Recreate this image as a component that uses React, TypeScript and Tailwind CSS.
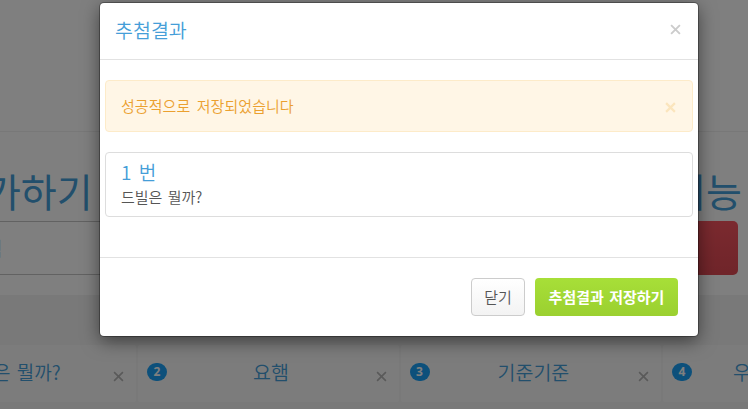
import React from "react";

function Cross({ size, className, width = 1.7 }: { size: number; className: string; width?: number }) {
  return (
    <svg width={size} height={size} viewBox="0 0 10 10" className={className} fill="none" stroke="currentColor" strokeWidth={width}>
      <path d="M1 1L9 9M9 1L1 9" />
    </svg>
  );
}

function Entry({ no, text, className, textClass }: { no: string; text: string; className: string; textClass: string }) {
  return (
    <li className={`flex h-[57px] shrink-0 items-start rounded-[2px] bg-[#f9f9f9] ${className}`}>
      <span className="mt-[18px] ml-[9px] flex h-[18px] w-5 shrink-0 items-center justify-center rounded-full bg-[#1ba1f6] font-['Open_Sans',sans-serif] text-[12px] font-bold text-white">
        {no}
      </span>
      <span className={`mt-[13px] shrink-0 leading-[28px] font-[350] whitespace-nowrap text-[#459ed8] ${textClass}`}>{text}</span>
      <Cross size={11} width={1.5} className="mt-[26px] mr-[12px] ml-auto shrink-0 text-[#b4b4b4]" />
    </li>
  );
}

function Page() {
  return (
    <div className="flex h-full w-full flex-col overflow-hidden bg-white">
      <div className="h-[132px] shrink-0 border-b border-[#f0f0f0]" />
      <div className="flex h-[163px] shrink-0 flex-col">
        <div className="flex h-[89px] justify-between pt-[34px] text-[39px] leading-[48px] font-normal whitespace-nowrap text-[#459ed8]">
          <h2 className="-ml-[51px]">추가하기</h2>
          <h2 className="mr-[6px]">기능</h2>
        </div>
        <div className="flex h-[54px] justify-between">
          <div className="flex w-[400px] items-center border-y border-[#c4c4c4] text-[19px] text-[#a9c3df]">
            <span className="-ml-[15px]">력</span>
          </div>
          <div className="mr-[10px] w-[200px] rounded-[5px] bg-linear-to-b from-[#f6545f] to-[#e04a54]" />
        </div>
      </div>
      <div className="flex flex-1 flex-col bg-[#f2f2f2] pt-[50px]">
        <ul className="flex gap-[2px]">
          <Entry no="1" text="드빌은 뭘까?" className="-ml-[125px] w-[261px]" textClass="ml-[54px] text-[19px] [word-spacing:2px]" />
          <Entry no="2" text="요햄" className="w-[260.5px]" textClass="ml-[86px] text-[19.5px]" />
          <Entry no="3" text="기준기준" className="w-[260.5px]" textClass="ml-[68px] text-[19.5px]" />
          <Entry no="4" text="우왕" className="w-[260.5px]" textClass="ml-[41px] text-[19.5px]" />
        </ul>
      </div>
    </div>
  );
}

function ResultDialog() {
  return (
    <div
      role="dialog"
      className="mt-[3px] ml-[100px] flex h-[333px] w-[598px] flex-col rounded-[4px] bg-white shadow-[0_0_0_1px_rgba(0,0,0,0.3),0_5px_18px_rgba(0,0,0,0.5)]"
    >
      <header className="flex h-[57px] items-start justify-between border-b border-[#e2e2e2] pr-[17px] pl-[15px]">
        <h4 className="mt-[13px] text-[19.5px] leading-[28px] font-[350] text-[#459ed8]">추첨결과</h4>
        <Cross size={11} className="mt-[21px] text-[#cccccc]" />
      </header>
      <div className="flex h-[197px] flex-col gap-5 px-[5px] pt-5">
        <div className="flex h-[52px] items-center justify-between rounded-[4px] border border-[#fdebc9] bg-[#fff6e6] pr-4 pl-[15px] text-[15px] text-[#eba02f]">
          <span className="font-[350] tracking-[0.06px] [word-spacing:3px]">성공적으로 저장되었습니다</span>
          <Cross size={11} className="mt-[2px] text-[#fbe5bd]" width={2} />
        </div>
        <div className="h-[65px] rounded-[4px] border border-[#dddddd] pt-[5px] pl-[15px]">
          <h4 className="text-[19px] leading-[28px] font-[350] text-[#459ed8] [word-spacing:3px]">1 번</h4>
          <p className="mt-px text-[15px] leading-[20px] font-[350] text-[#555555] [word-spacing:2px]">드빌은 뭘까?</p>
        </div>
      </div>
      <footer className="flex flex-1 justify-end gap-[10px] border-t border-[#e2e2e2] pt-5 pr-5">
        <button className="h-[38px] w-[54px] rounded-[4px] border border-[#cccccc] bg-linear-to-b from-white to-[#f3f3f3] text-[15px] font-[350] text-[#555555]">
          닫기
        </button>
        <button className="h-[38px] w-[143px] rounded-[4px] bg-linear-to-b from-[#a7df38] to-[#9bd030] text-[15px] font-bold whitespace-nowrap text-white [word-spacing:2px]">
          추첨결과 저장하기
        </button>
      </footer>
    </div>
  );
}

export default function App() {
  return (
    <main className="relative h-[409px] w-[748px] overflow-hidden font-['Noto_Sans_CJK_KR',sans-serif]">
      <Page />
      <div className="absolute inset-0 bg-black/50">
        <ResultDialog />
      </div>
    </main>
  );
}
